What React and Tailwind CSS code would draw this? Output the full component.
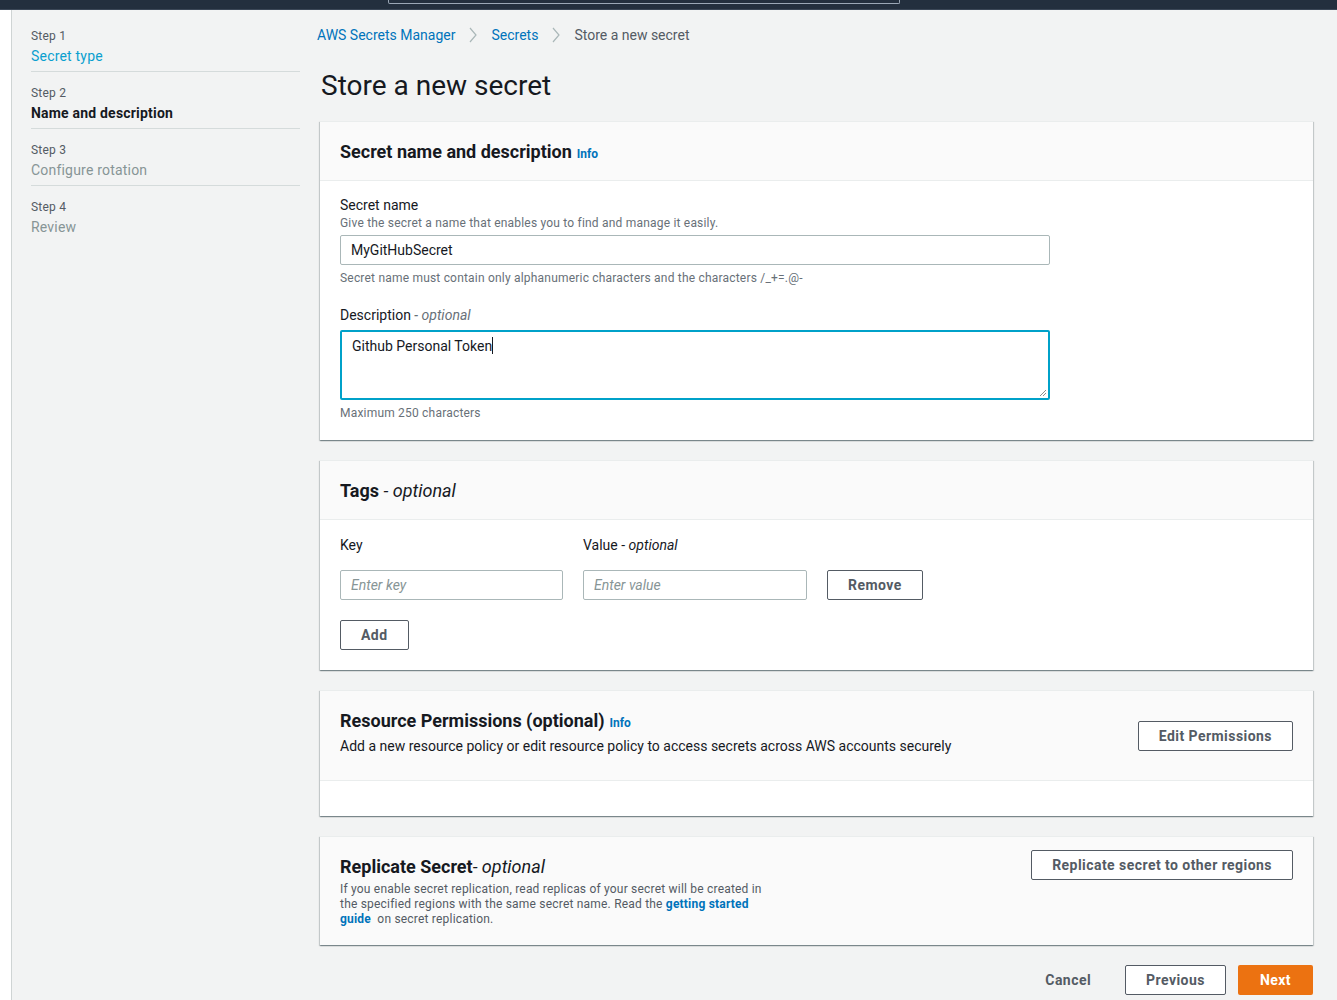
const font = { fontFamily: 'Roboto, "Noto Sans", sans-serif' };

const panel =
  'border-t border-[#eaeded] shadow-[0_1px_1px_0_rgba(0,28,36,0.3),1px_1px_1px_0_rgba(0,28,36,0.15),-1px_1px_1px_0_rgba(0,28,36,0.15)]';

const btn =
  'h-[30px] border border-[#545b64] rounded-[2px] bg-white text-[14px] font-bold text-[#545b64] px-[20px] tracking-[0.45px]';

const Chevron = () => (
  <svg width="10" height="16" viewBox="0 0 10 16" className="mx-[13px]">
    <polyline points="2,1 8,8 2,15" fill="none" stroke="#aab7b8" strokeWidth="1.2" />
  </svg>
);

const Step = ({ n, title, tone, last }) => (
  <div className={'pt-[13px] pb-[5px] ' + (last ? '' : 'border-b border-[#d5dbdb]')}>
    <div className="text-[12px] leading-[16px] text-[#545b64] tracking-[0.2px]">Step {n}</div>
    <div
      className={
        'mt-[2px] text-[14px] leading-[20px] tracking-[0.2px] ' +
        (tone === 'link'
          ? 'text-[#0a9fcf]'
          : tone === 'active'
          ? 'text-[#16191f] font-bold'
          : 'text-[#879596]')
      }
    >
      {title}
    </div>
  </div>
);

const Info = () => (
  <span className="ml-[5px] text-[12px] font-bold text-[#0073bb]">Info</span>
);

export default function App() {
  return (
    <div className="min-h-[1000px] flex flex-col bg-[#f2f3f3]" style={font}>
      {/* top bar with cut-off search box */}
      <div className="h-[10px] bg-[#232f3e] border-b border-[#3b4757] shrink-0">
        <div className="ml-[388px] w-[512px] h-[4px] border-x border-b border-[#9ba7b6] rounded-b-[2px]" />
      </div>

      <div className="flex flex-1">
        <div className="w-[12px] bg-white border-r border-[#cfd4d4] shrink-0" />

        {/* wizard steps */}
        <nav className="w-[288px] pl-[19px] pt-[5px] shrink-0">
          <Step n={1} title="Secret type" tone="link" />
          <Step n={2} title="Name and description" tone="active" />
          <Step n={3} title="Configure rotation" />
          <Step n={4} title="Review" last />
        </nav>

        <main className="flex-1 pl-[20px] pr-[24px] text-[#16191f]">
          {/* breadcrumb */}
          <div className="flex items-center pt-[15px] h-[35px] text-[14px] leading-[20px] -ml-[3px]">
            <span className="text-[#0073bb]">AWS Secrets Manager</span>
            <Chevron />
            <span className="text-[#0073bb]">Secrets</span>
            <Chevron />
            <span className="text-[#545b64]">Store a new secret</span>
          </div>

          <h1 className="mt-[23px] text-[28px] leading-[36px] font-normal ml-[1px]">Store a new secret</h1>

          {/* Secret name and description */}
          <section className={'mt-[17px] bg-white ' + panel}>
            <div className="bg-[#fafafa] px-[20px] pt-[19px] pb-[17px] border-b border-[#eaeded] flex items-baseline">
              <h2 className="text-[18px] leading-[22px] font-bold">Secret name and description</h2>
              <Info />
            </div>
            <div className="px-[20px] pt-[14px] pb-[19px]">
              <div className="text-[14px] leading-[20px]">Secret name</div>
              <div className="text-[12px] leading-[16px] text-[#687078] tracking-[0.2px]">
                Give the secret a name that enables you to find and manage it easily.
              </div>
              <input
                defaultValue="MyGitHubSecret"
                className="mt-[4px] block w-[710px] h-[30px] border border-[#aab7b8] rounded-[2px] px-[10px] text-[14px] text-[#16191f] outline-none"
              />
              <div className="mt-[5px] text-[12px] leading-[16px] text-[#687078] tracking-[0.2px]">
                Secret name must contain only alphanumeric characters and the characters /_+=.@-
              </div>
              <div className="mt-[19px] text-[14px] leading-[20px]">
                Description <span className="italic text-[#687078]">- optional</span>
              </div>
              <div className="relative mt-[5px] w-[710px] h-[70px] border-2 border-[#00a1c9] rounded-[2px] px-[10px] pt-[4px] text-[14px] leading-[20px]">
                Github Personal Token
                <span className="inline-block w-px h-[17px] bg-[#16191f] align-[-3px]" />
                <svg width="8" height="8" viewBox="0 0 8 8" className="absolute right-[1px] bottom-[1px]">
                  <line x1="1" y1="7" x2="7" y2="1" stroke="#8d8d8d" strokeWidth="1" />
                  <line x1="4" y1="7" x2="7" y2="4" stroke="#8d8d8d" strokeWidth="1" />
                </svg>
              </div>
              <div className="mt-[5px] text-[12px] leading-[16px] text-[#687078] tracking-[0.2px]">
                Maximum 250 characters
              </div>
            </div>
          </section>

          {/* Tags */}
          <section className={'mt-[20px] bg-white ' + panel}>
            <div className="bg-[#fafafa] px-[20px] pt-[19px] pb-[17px] border-b border-[#eaeded]">
              <h2 className="text-[18px] leading-[22px] font-bold">
                Tags <span className="font-normal italic">- optional</span>
              </h2>
            </div>
            <div className="px-[20px] pt-[15px] pb-[20px]">
              <div className="flex gap-[20px] text-[14px] leading-[20px]">
                <div className="w-[223px]">Key</div>
                <div>
                  Value - <span className="italic">optional</span>
                </div>
              </div>
              <div className="mt-[15px] flex gap-[20px]">
                <input
                  placeholder="Enter key"
                  className="w-[223px] h-[30px] border border-[#aab7b8] rounded-[2px] px-[10px] text-[14px] placeholder:italic placeholder:text-[#879596] outline-none"
                />
                <input
                  placeholder="Enter value"
                  className="w-[224px] h-[30px] border border-[#aab7b8] rounded-[2px] px-[10px] text-[14px] placeholder:italic placeholder:text-[#879596] outline-none"
                />
                <button className={btn}>Remove</button>
              </div>
              <button className={'mt-[20px] ' + btn}>Add</button>
            </div>
          </section>

          {/* Resource permissions */}
          <section className={'mt-[20px] bg-white ' + panel}>
            <div className="bg-[#fafafa] px-[20px] pt-[19px] pb-[24px] border-b border-[#eaeded] flex justify-between items-start">
              <div>
                <h2 className="flex items-baseline text-[18px] leading-[22px] font-bold">
                  Resource Permissions (optional)
                  <Info />
                </h2>
                <p className="mt-[2px] text-[14px] leading-[20px]">
                  Add a new resource policy or edit resource policy to access secrets across AWS accounts securely
                </p>
              </div>
              <button className={'mt-[11px] ' + btn}>Edit Permissions</button>
            </div>
            <div className="h-[35px]" />
          </section>

          {/* Replicate secret */}
          <section className={'mt-[20px] bg-[#fafafa] ' + panel}>
            <div className="px-[20px] flex justify-between items-start">
              <div className="pt-[19px] pb-[18px]">
                <h2 className="text-[18px] leading-[22px] font-bold">
                  Replicate Secret<span className="font-normal italic">- optional</span>
                </h2>
                <p className="mt-[4px] w-[440px] text-[12px] leading-[15px] text-[#545b64] tracking-[0.2px]">
                  If you enable secret replication, read replicas of your secret will be created in
                  <br />
                  the specified regions with the same secret name. Read the{' '}
                  <span className="font-bold text-[#0073bb]">getting started</span>
                  <br />
                  <span className="font-bold text-[#0073bb]">guide</span>&nbsp; on secret replication.
                </p>
              </div>
              <button className={'mt-[13px] ' + btn}>Replicate secret to other regions</button>
            </div>
          </section>

          {/* footer actions */}
          <div className="mt-[20px] flex justify-end items-center gap-[12px]">
            <button className="h-[30px] px-[22px] text-[14px] font-bold text-[#545b64] tracking-[0.45px]">Cancel</button>
            <button className={btn}>Previous</button>
            <button className="h-[30px] px-[22px] rounded-[2px] bg-[#ec7211] text-[14px] font-bold text-white tracking-[0.45px]">
              Next
            </button>
          </div>
        </main>
      </div>
    </div>
  );
}
